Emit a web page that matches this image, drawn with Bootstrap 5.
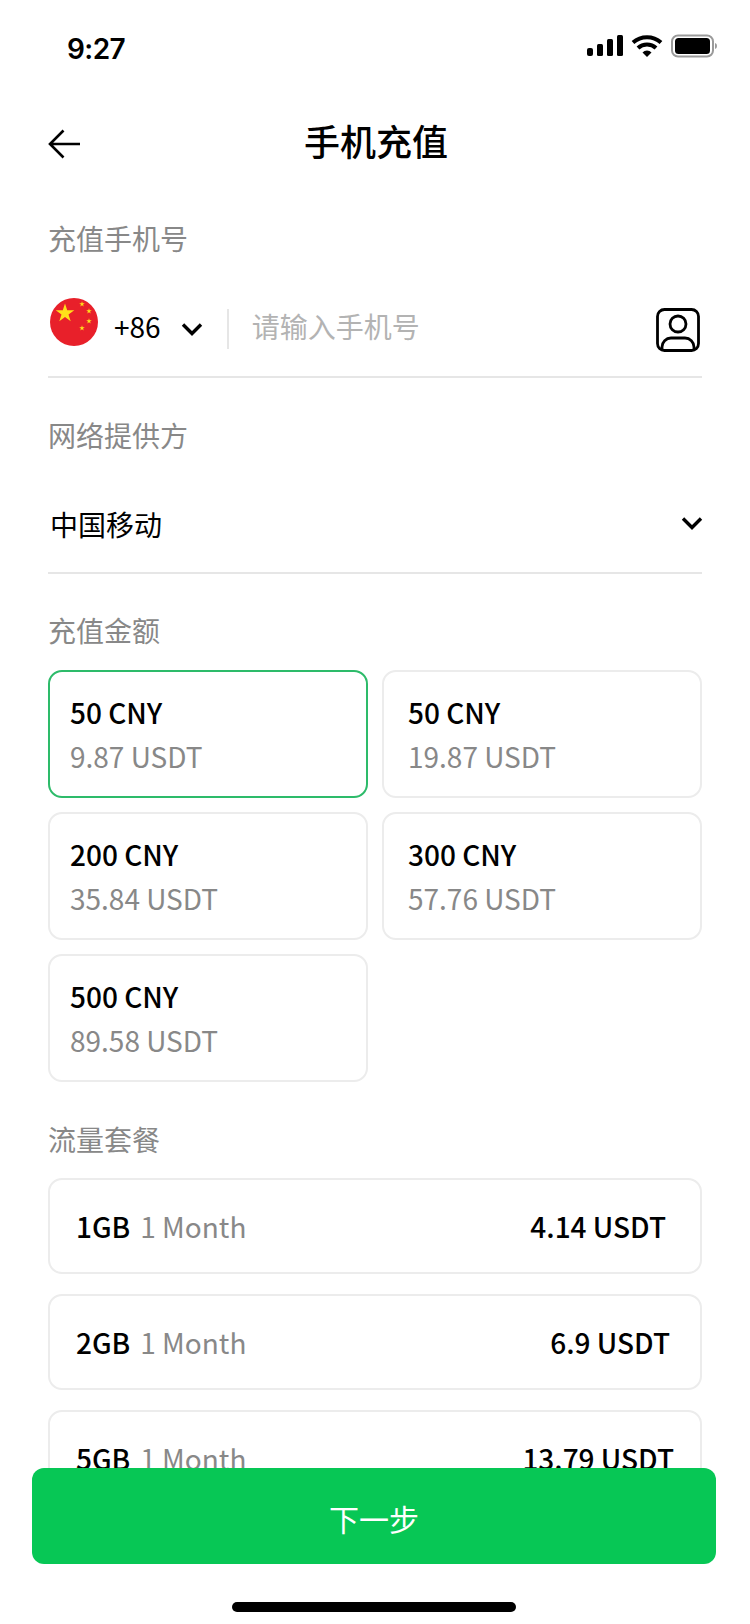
<!DOCTYPE html>
<html lang="zh-CN">
<head>
    <meta charset="UTF-8">
    <meta name="viewport" content="width=device-width, initial-scale=1.0">
    <title>手机充值</title>
    <link href="https://cdn.jsdelivr.net/npm/bootstrap@5.3.0/dist/css/bootstrap.min.css" rel="stylesheet">
    <style>
        html, body {
            height: 1624px;
            overflow: hidden;
            background-color: #fff;
        }
        body {
            font-family: "Noto Sans CJK SC", "Noto Sans", sans-serif;
            font-size: 28px;
            line-height: 40px;
            color: #000;
        }
        .phone-screen {
            height: 1624px;
            overflow: hidden;
        }
        .status-bar {
            height: 98px;
            padding: 0 32px 0 67px;
        }
        .status-time {
            font-family: Inter, "Liberation Sans", sans-serif;
            font-weight: 600;
            font-size: 28px;
            letter-spacing: -0.6px;
        }
        .status-icons {
            margin-top: -6px;
        }
        .page-head {
            height: 90px;
            padding: 0 47px 6px 49px;
        }
        .page-title {
            font-size: 36px;
            font-weight: 500;
            line-height: 50px;
            margin: 0;
        }
        .back-arrow {
            left: 48px;
            top: 46px;
            transform: translateY(-50%);
        }
        .form-area {
            padding: 0 48px;
        }
        .field-label {
            color: #888;
            line-height: 40px;
            margin: 0;
        }
        .label-phone { margin-top: 30px; }
        .label-carrier { margin-top: 37px; }
        .label-amount { margin-top: 36px; }
        .label-plan { margin-top: 37px; }
        .phone-row {
            height: 120px;
            padding-top: 18px;
            border-bottom: 2px solid #e6e6e6;
        }
        .flag-icon {
            margin-left: 2px;
            margin-right: 16px;
            margin-top: -8px;
        }
        .code-chevron {
            margin-left: 20px;
            margin-top: 6px;
        }
        .phone-sep {
            width: 2px;
            height: 40px;
            background-color: #e6e6e6;
            margin: 6px 23px 0 24px;
        }
        .phone-hint {
            color: #b3b3b3;
        }
        .contact-icon {
            margin-right: 2px;
            margin-top: 8px;
        }
        .carrier-row {
            height: 119px;
            padding: 20px 0 0 2px;
            border-bottom: 2px solid #e6e6e6;
        }
        .carrier-chevron {
            margin-right: -1px;
            margin-top: -2px;
        }
        .amount-grid {
            display: grid;
            grid-template-columns: 320px 320px;
            column-gap: 14px;
            row-gap: 14px;
            margin-top: 20px;
        }
        .amount-tile {
            height: 128px;
            border: 2px solid #ececec;
            border-radius: 14px;
            padding: 18px 20px 0;
            line-height: 44px;
        }
        .amount-tile:nth-child(even) {
            padding-left: 24px;
        }
        .amount-tile.is-picked {
            border-color: #2dbb6a;
        }
        .tile-main, .pack-main {
            font-weight: 500;
        }
        .tile-sub, .pack-sub {
            color: #888;
        }
        .plan-list {
            margin-top: 19px;
            display: flex;
            flex-direction: column;
            gap: 20px;
        }
        .plan-row {
            height: 96px;
            border: 2px solid #ececec;
            border-radius: 14px;
            padding: 0 0 0 26px;
            flex-shrink: 0;
        }
        .pack-sub {
            margin-left: 10px;
        }
        .price-a { margin-right: 34px; }
        .price-b { margin-right: 30px; }
        .price-c { margin-right: 26px; }
        .foot-bar {
            left: 0;
            right: 0;
            bottom: 0;
            height: 156px;
            background-color: #fff;
            padding: 0 34px 0 32px;
        }
        .next-btn {
            display: block;
            width: 100%;
            height: 96px;
            background-color: #07c755;
            border: none;
            border-radius: 12px;
            color: #fff;
            font-size: 30px;
            padding-top: 4px;
        }
        .home-bar {
            left: 232px;
            bottom: 12px;
            width: 284px;
            height: 10px;
            background-color: #000;
            border-radius: 5px;
        }
    </style>
</head>
<body>
    <div class="phone-screen position-relative">
        <div class="status-bar d-flex justify-content-between align-items-center">
            <span class="status-time">9:27</span>
            <svg class="status-icons" width="131" height="24" viewBox="0 0 131 24">
                <rect x="0" y="14" width="6" height="8" rx="2"/>
                <rect x="10" y="10" width="6" height="12" rx="1.5"/>
                <rect x="20" y="5" width="6" height="17" rx="1.5"/>
                <rect x="30" y="1" width="6" height="21" rx="1.5"/>
                <path d="M46 8.5a21 21 0 0 1 28 0" fill="none" stroke="#000" stroke-width="4"/>
                <path d="M51 14a13 13 0 0 1 18 0" fill="none" stroke="#000" stroke-width="4"/>
                <path d="M55.5 18.5a6 6 0 0 1 9 0L60 23z"/>
                <rect x="85" y="1.5" width="41" height="21" rx="6" fill="none" stroke="#9a9a9a" stroke-width="2"/>
                <rect x="88" y="4" width="35" height="16" rx="3.5"/>
                <path d="M128 9v6a3 3 0 0 0 2-3 3 3 0 0 0-2-3z" fill="#9a9a9a"/>
            </svg>
        </div>

        <div class="page-head position-relative d-flex justify-content-center align-items-center">
            <svg class="back-arrow position-absolute" width="33" height="30" viewBox="0 0 33 30" fill="none" stroke="#000" stroke-width="2.6">
                <path d="M32 15H2M15.500 1.500 2 15l13.500 13.500"/>
            </svg>
            <h1 class="page-title">手机充值</h1>
        </div>

        <div class="form-area">
            <p class="field-label label-phone">充值手机号</p>

            <div class="phone-row d-flex align-items-center">
                <svg class="flag-icon flex-shrink-0" width="48" height="48" viewBox="0 0 48 48">
                    <circle cx="24" cy="24" r="24" fill="#e8202a"/>
                    <path fill="#ffe01a" d="M15 5.500l2.200 6.800h7.100l-5.800 4.200 2.200 6.800-5.700-4.200-5.700 4.200 2.200-6.800-5.800-4.200h7.100z"/>
                    <path fill="#ffe01a" d="M32 3.200l.65 2h2.100l-1.700 1.250.65 2-1.700-1.250-1.700 1.250.65-2-1.700-1.250h2.100zM39 10.200l.65 2h2.100l-1.700 1.250.65 2-1.700-1.250-1.700 1.250.65-2-1.700-1.250h2.100zM39 20.200l.65 2h2.100l-1.700 1.250.65 2-1.700-1.250-1.700 1.250.65-2-1.700-1.250h2.100zM32 27.200l.65 2h2.100l-1.700 1.250.65 2-1.700-1.250-1.700 1.250.65-2-1.700-1.250h2.100z"/>
                </svg>
                <span>+86</span>
                <svg class="code-chevron" width="22" height="14" viewBox="0 0 22 14" fill="none" stroke="#000" stroke-width="3.400">
                    <path d="M2 2.500l9 9 9-9"/>
                </svg>
                <span class="phone-sep"></span>
                <span class="phone-hint">请输入手机号</span>
                <svg class="contact-icon ms-auto" width="44" height="44" viewBox="0 0 44 44" fill="none" stroke="#000" stroke-width="2.800">
                    <rect x="1.500" y="1.500" width="41" height="41" rx="7"/>
                    <circle cx="22" cy="16" r="8"/>
                    <path d="M6 42v-3a9 9 0 0 1 9-9h14a9 9 0 0 1 9 9v3"/>
                </svg>
            </div>

            <p class="field-label label-carrier">网络提供方</p>

            <div class="carrier-row d-flex justify-content-between align-items-center">
                <span>中国移动</span>
                <svg class="carrier-chevron" width="22" height="14" viewBox="0 0 22 14" fill="none" stroke="#000" stroke-width="3.400">
                    <path d="M2 2.500l9 9 9-9"/>
                </svg>
            </div>

            <p class="field-label label-amount">充值金额</p>

            <div class="amount-grid">
                <div class="amount-tile is-picked">
                    <div class="tile-main">50 CNY</div>
                    <div class="tile-sub">9.87 USDT</div>
                </div>
                <div class="amount-tile">
                    <div class="tile-main">50 CNY</div>
                    <div class="tile-sub">19.87 USDT</div>
                </div>
                <div class="amount-tile">
                    <div class="tile-main">200 CNY</div>
                    <div class="tile-sub">35.84 USDT</div>
                </div>
                <div class="amount-tile">
                    <div class="tile-main">300 CNY</div>
                    <div class="tile-sub">57.76 USDT</div>
                </div>
                <div class="amount-tile">
                    <div class="tile-main">500 CNY</div>
                    <div class="tile-sub">89.58 USDT</div>
                </div>
            </div>

            <p class="field-label label-plan">流量套餐</p>

            <div class="plan-list">
                <div class="plan-row d-flex align-items-center">
                    <span class="pack-main">1GB</span><span class="pack-sub">1 Month</span>
                    <span class="pack-main ms-auto price-a">4.14 USDT</span>
                </div>
                <div class="plan-row d-flex align-items-center">
                    <span class="pack-main">2GB</span><span class="pack-sub">1 Month</span>
                    <span class="pack-main ms-auto price-b">6.9 USDT</span>
                </div>
                <div class="plan-row d-flex align-items-center">
                    <span class="pack-main">5GB</span><span class="pack-sub">1 Month</span>
                    <span class="pack-main ms-auto price-c">13.79 USDT</span>
                </div>
            </div>
        </div>

        <div class="foot-bar position-absolute">
            <button class="next-btn" type="button">下一步</button>
        </div>
        <div class="home-bar position-absolute"></div>
    </div>

    <script src="https://cdn.jsdelivr.net/npm/bootstrap@5.3.0/dist/js/bootstrap.bundle.min.js"></script>
</body>
</html>
